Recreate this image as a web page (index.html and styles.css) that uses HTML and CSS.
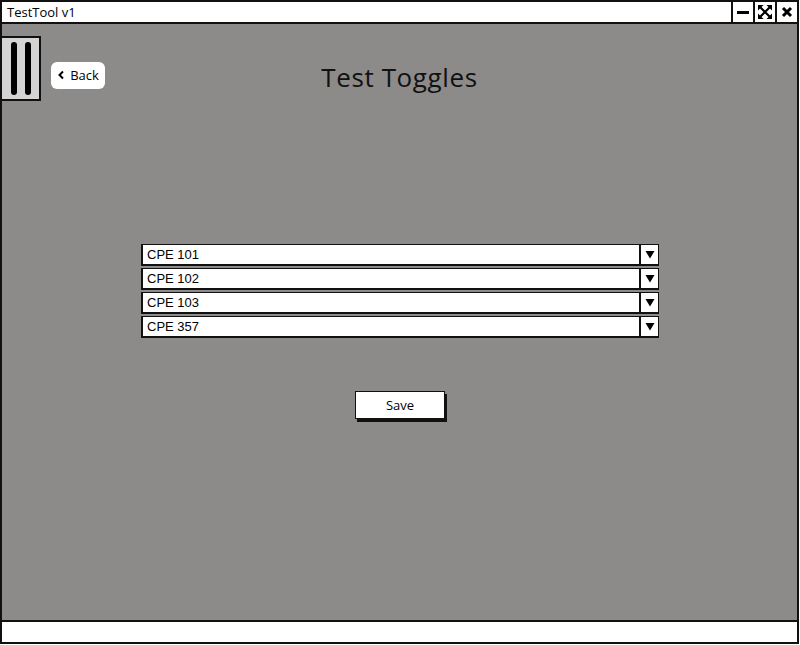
FILE: index.html
```html
<!DOCTYPE html>
<html>
<head>
<meta charset="utf-8">
<link rel="stylesheet" href="styles.css">
</head>
<body>
<div class="window">
  <div class="titlebar">
    <span class="title">TestTool v1</span>
    <div class="winbtns">
      <div class="wbtn"><svg width="14" height="14" viewBox="0 0 14 14"><rect x="1" y="6" width="12" height="3" fill="#000"/></svg></div>
      <div class="wbtn"><svg width="16" height="16" viewBox="0 0 16 16"><path d="M3.5 3.5 L12.5 12.5 M12.5 3.5 L3.5 12.5" stroke="#000" stroke-width="2.2"/><path d="M1 1 H6.5 L1 6.5 Z M15 1 H9.5 L15 6.5 Z M1 15 H6.5 L1 9.5 Z M15 15 H9.5 L15 9.5 Z" fill="#000"/></svg></div>
      <div class="wbtn"><svg width="12" height="12" viewBox="0 0 12 12"><path d="M2 2 L10 10 M10 2 L2 10" stroke="#000" stroke-width="3"/></svg></div>
    </div>
  </div>
  <div class="content">
    <div class="topbar">
      <div class="menu"><span class="bar"></span><span class="bar"></span></div>
      <button class="back"><svg width="8" height="10" viewBox="0 0 8 10"><path d="M6 1.5 L2.5 5 L6 8.5" fill="none" stroke="#000" stroke-width="2"/></svg>Back</button>
      <h1 class="heading">Test Toggles</h1>
    </div>
    <div class="selects">
      <div class="select"><span class="val">CPE 101</span><span class="arrow"><svg width="10" height="9" viewBox="0 0 10 9"><path d="M0.5 1 H9.5 L5 8.5 Z" fill="#000"/></svg></span></div>
      <div class="select"><span class="val">CPE 102</span><span class="arrow"><svg width="10" height="9" viewBox="0 0 10 9"><path d="M0.5 1 H9.5 L5 8.5 Z" fill="#000"/></svg></span></div>
      <div class="select"><span class="val">CPE 103</span><span class="arrow"><svg width="10" height="9" viewBox="0 0 10 9"><path d="M0.5 1 H9.5 L5 8.5 Z" fill="#000"/></svg></span></div>
      <div class="select"><span class="val">CPE 357</span><span class="arrow"><svg width="10" height="9" viewBox="0 0 10 9"><path d="M0.5 1 H9.5 L5 8.5 Z" fill="#000"/></svg></span></div>
    </div>
    <div class="actions"><button class="save">Save</button></div>
  </div>
  <div class="statusbar"></div>
</div>
</body>
</html>
```

FILE: styles.css
```css
html, body {
  margin: 0;
  padding: 0;
  background: #fff;
}
body {
  width: 800px;
  height: 645px;
  font-family: "Liberation Sans", Arial, sans-serif;
}
.window {
  box-sizing: border-box;
  width: 799px;
  height: 644px;
  border: 2px solid #111;
  display: flex;
  flex-direction: column;
}
.titlebar {
  height: 20px;
  border-bottom: 2px solid #111;
  display: flex;
  align-items: center;
  justify-content: space-between;
  background: #fff;
}
.title {
  font-family: "Open Sans", "Liberation Sans", sans-serif;
  font-size: 13px;
  padding-left: 5px;
  color: #000;
}
.winbtns {
  display: flex;
  height: 100%;
}
.wbtn {
  width: 20px;
  border-left: 2px solid #111;
  display: flex;
  align-items: center;
  justify-content: center;
}
.content {
  flex: 1;
  background: #8c8b89;
  display: flex;
  flex-direction: column;
}
.topbar {
  position: relative;
  height: 76px;
  padding-top: 12px;
  box-sizing: border-box;
  display: flex;
  align-items: flex-start;
}
.menu {
  box-sizing: border-box;
  width: 39px;
  height: 65px;
  background: #d4d4d4;
  border: 2px solid #111;
  border-left: none;
  display: flex;
  justify-content: center;
  gap: 8px;
  padding-top: 4px;
  padding-bottom: 4px;
}
.bar {
  width: 6px;
  background: #000;
  border-radius: 3px;
  height: 100%;
}
.back {
  margin-left: 10px;
  margin-top: 26px;
  width: 54px;
  height: 27px;
  background: #fff;
  border: none;
  border-radius: 6px;
  font-family: "Open Sans", "Liberation Sans", sans-serif;
  font-size: 13px;
  color: #000;
  display: flex;
  align-items: center;
  justify-content: center;
  gap: 5px;
  padding: 0 0 2px 0;
}
.heading {
  position: absolute;
  left: 0;
  right: 0;
  top: 35px;
  margin: 0;
  text-align: center;
  font-family: "Open Sans", "Liberation Sans", sans-serif;
  font-weight: 400;
  font-size: 26px;
  letter-spacing: 0.6px;
  color: #111;
  pointer-events: none;
}
.selects {
  margin-top: 144px;
  margin-left: 139px;
  width: 518px;
  display: flex;
  flex-direction: column;
  gap: 2px;
}
.select {
  box-sizing: border-box;
  height: 22px;
  background: #fff;
  border: 1px solid #111;
  border-left-width: 2px;
  border-bottom-width: 2px;
  display: flex;
  align-items: center;
}
.val {
  flex: 1;
  font-size: 13px;
  padding-left: 4px;
  color: #000;
}
.arrow {
  width: 17px;
  height: 100%;
  border-left: 2px solid #111;
  display: flex;
  align-items: center;
  justify-content: center;
}
.actions {
  display: flex;
  justify-content: center;
  margin-top: 53px;
  padding-left: 1px;
}
.save {
  box-sizing: border-box;
  width: 90px;
  height: 28px;
  background: #fff;
  border: 1px solid #111;
  box-shadow: 2px 3px 0 #111;
  font-family: "Open Sans", "Liberation Sans", sans-serif;
  font-size: 13px;
  color: #000;
  padding: 0;
}
.statusbar {
  height: 20px;
  border-top: 2px solid #111;
  background: #fff;
}
```
